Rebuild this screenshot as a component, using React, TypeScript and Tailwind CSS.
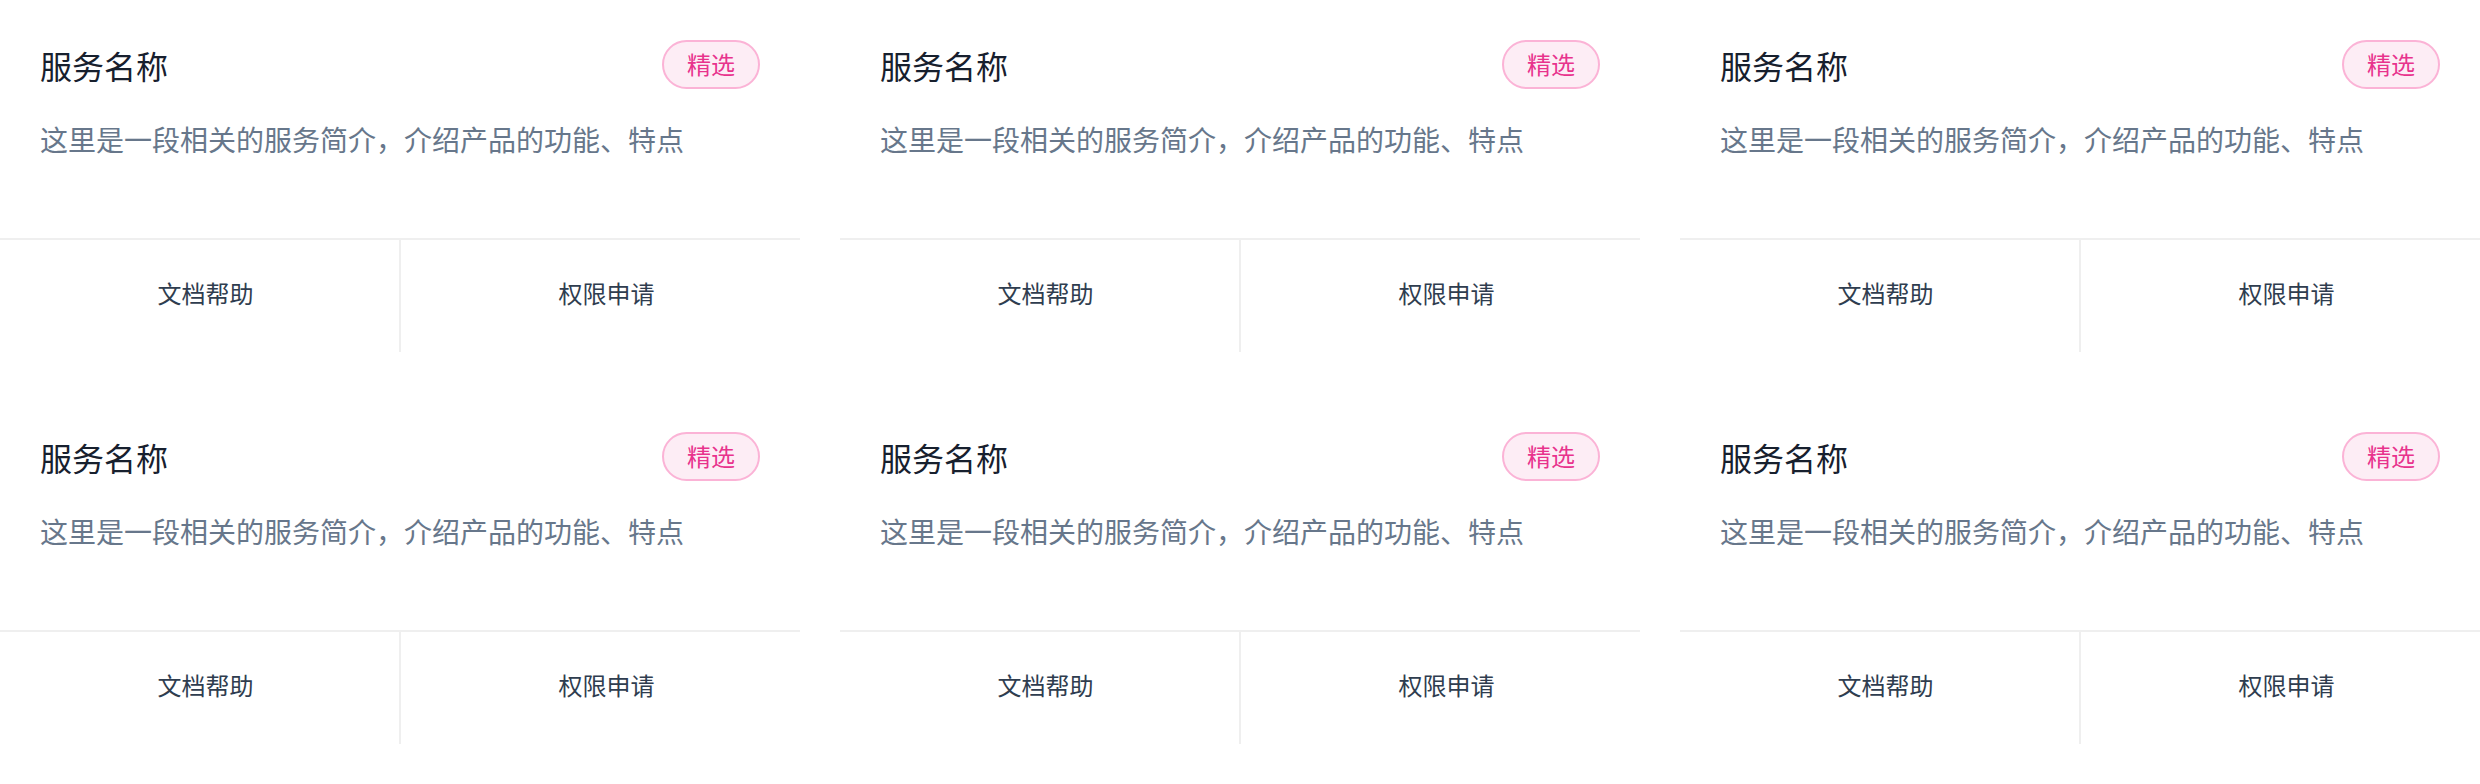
import React from "react";

type Service = {
  id: number;
  name: string;
  desc: string;
  tag: string;
};

const services: Service[] = Array.from({ length: 6 }, (_, i) => ({
  id: i,
  name: "服务名称",
  desc: "这里是一段相关的服务简介，介绍产品的功能、特点",
  tag: "精选",
}));

function ServiceCard({ service }: { service: Service }) {
  return (
    <div className="flex h-[352px] flex-col bg-white">
      <div className="flex-1 px-[40px] pt-[40px]">
        <div className="flex h-[49px] items-center justify-between">
          <h3 className="text-[32px] leading-[40px] font-normal text-[#17202e]">
            {service.name}
          </h3>
          <span className="flex h-[49px] w-[98px] items-center justify-center rounded-full border-2 border-[#fbb3d6] bg-[#fdedf5] pb-[2px] text-[24px] text-[#e8338d]">
            {service.tag}
          </span>
        </div>
        <p className="mt-[30px] text-[28px] leading-[40px] text-[#67778b]">
          {service.desc}
        </p>
      </div>
      <div className="flex h-[114px] border-t-2 border-[#efefef]">
        <button className="flex-1 border-r-2 border-[#efefef] pb-[6px] pl-[12px] text-[24px] text-[#2f3d4f]">
          文档帮助
        </button>
        <button className="flex-1 pb-[6px] pl-[12px] text-[24px] text-[#2f3d4f]">
          权限申请
        </button>
      </div>
    </div>
  );
}

export default function App() {
  return (
    <div
      className="min-h-[784px] w-[2480px] bg-white pb-[40px]"
      style={{ fontFamily: '"Noto Sans CJK SC", "Noto Sans", sans-serif' }}
    >
      <div className="grid grid-cols-3 gap-[40px]">
        {services.map((s) => (
          <ServiceCard key={s.id} service={s} />
        ))}
      </div>
    </div>
  );
}
